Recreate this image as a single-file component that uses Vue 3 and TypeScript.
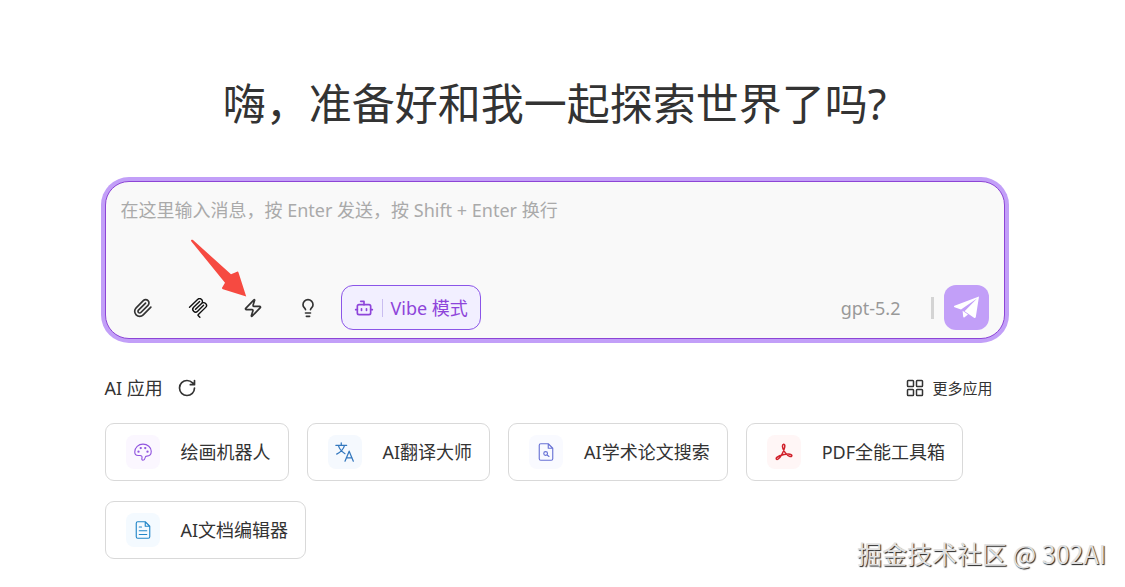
<script setup lang="ts">
import { ref } from 'vue'

interface AppCard {
  name: string
  icon: 'palette' | 'translate' | 'paper' | 'pdf' | 'doc'
}

const message = ref('')
const apps: AppCard[] = [
  { name: '绘画机器人', icon: 'palette' },
  { name: 'AI翻译大师', icon: 'translate' },
  { name: 'AI学术论文搜索', icon: 'paper' },
  { name: 'PDF全能工具箱', icon: 'pdf' },
  { name: 'AI文档编辑器', icon: 'doc' },
]
</script>

<template>
  <main class="page">
    <h1 class="title">嗨，准备好和我一起探索世界了吗?</h1>

    <form class="composer" @submit.prevent>
      <textarea
        v-model="message"
        class="message"
        aria-label="消息"
        placeholder="在这里输入消息，按 Enter 发送，按 Shift + Enter 换行"
      ></textarea>
      <div class="toolbar">
        <button type="button" class="tool" aria-label="附件">
          <svg class="icon line" viewBox="0 0 24 24">
            <path d="m21.44 11.05-9.19 9.19a6 6 0 0 1-8.49-8.49l8.57-8.57A4 4 0 1 1 18 8.84l-8.59 8.57a2 2 0 0 1-2.83-2.83l8.49-8.48" />
          </svg>
        </button>
        <button type="button" class="tool mcp" aria-label="MCP">
          <svg class="icon solid" viewBox="0 0 24 24">
            <path d="M15.688 2.343a2.588 2.588 0 00-3.61 0l-9.626 9.44a.863.863 0 01-1.203 0 .823.823 0 010-1.18l9.626-9.44a4.313 4.313 0 016.016 0 4.116 4.116 0 011.204 3.54 4.3 4.3 0 013.609 1.18l.05.05a4.115 4.115 0 010 5.9l-8.706 8.537a.274.274 0 000 .393l1.788 1.754a.823.823 0 010 1.18.863.863 0 01-1.203 0l-1.788-1.753a1.92 1.92 0 010-2.754l8.706-8.538a2.47 2.47 0 000-3.54l-.05-.049a2.588 2.588 0 00-3.607-.003l-7.172 7.034-.002.002-.098.097a.863.863 0 01-1.204 0 .823.823 0 010-1.18l7.273-7.133a2.47 2.47 0 00-.003-3.537z" />
            <path d="M14.485 4.703a.823.823 0 000-1.18.863.863 0 00-1.204 0l-7.119 6.982a4.115 4.115 0 000 5.9 4.314 4.314 0 006.016 0l7.12-6.982a.823.823 0 000-1.18.863.863 0 00-1.204 0l-7.119 6.982a2.588 2.588 0 01-3.61 0 2.47 2.47 0 010-3.54l7.12-6.982z" />
          </svg>
        </button>
        <button type="button" class="tool" aria-label="快捷指令">
          <svg class="icon line" viewBox="0 0 24 24">
            <path d="M4 14a1 1 0 0 1-.78-1.63l9.9-10.2a.5.5 0 0 1 .86.46l-1.92 6.02A1 1 0 0 0 13 10h7a1 1 0 0 1 .78 1.63l-9.9 10.2a.5.5 0 0 1-.86-.46l1.92-6.02A1 1 0 0 0 11 14z" />
          </svg>
          <svg class="pointer" viewBox="0 0 57 58" aria-hidden="true">
            <path d="M1.2 2.2C.5 1 1.800.2 3 1L41 35.300 47 32.700c.8-.3 1.300 0 1.500.8L56.200 57.500 33 50.200c-1.200-.4-1.300-1.200-.5-2.100L35 43.800Z" />
          </svg>
        </button>
        <button type="button" class="tool" aria-label="深度思考">
          <svg class="icon line" viewBox="0 0 24 24">
            <path d="M15 14c.2-1 .7-1.7 1.5-2.5 1-.9 1.5-2.2 1.5-3.5A6 6 0 0 0 6 8c0 1 .2 2.2 1.5 3.5.7.7 1.3 1.5 1.5 2.5M9 18h6M10 22h4" />
          </svg>
        </button>
        <button type="button" class="vibe">
          <svg class="icon line" viewBox="0 0 24 24">
            <path d="M12 8V4H8M2 14h2M20 14h2M15 13v2M9 13v2" />
            <rect x="4" y="8" width="16" height="12" rx="2" />
          </svg>
          <span class="vibe-rule"></span>
          <span>Vibe 模式</span>
        </button>
        <button type="button" class="model">gpt-5.2</button>
        <span class="rule"></span>
        <button type="submit" class="send" aria-label="发送">
          <svg viewBox="0 0 45 45">
            <path d="M35 11.5 10.5 20.800c-.8.3-.8 1.100 0 1.400L17 24.600 33 13.500 20.600 26.200 30 32.700c.9.5 1.600.2 1.800-.7Z" />
            <path d="M18.600 25.800 19.200 31.800c.1.900.8 1 1.400.4L24 29.400Z" />
          </svg>
        </button>
      </div>
    </form>

    <header class="apps-head">
      <h2>AI 应用</h2>
      <button type="button" class="plain" aria-label="刷新">
        <svg class="icon line" viewBox="0 0 24 24">
          <path d="M21 12a9 9 0 1 1-9-9c2.52 0 4.93 1 6.74 2.74L21 8M21 3v5h-5" />
        </svg>
      </button>
      <button type="button" class="plain more">
        <svg class="icon-sm line" viewBox="0 0 24 24">
          <rect x="2" y="2" width="8" height="8" rx="1" />
          <rect x="14" y="2" width="8" height="8" rx="1" />
          <rect x="14" y="14" width="8" height="8" rx="1" />
          <rect x="2" y="14" width="8" height="8" rx="1" />
        </svg>
        <span>更多应用</span>
      </button>
    </header>

    <nav class="apps" aria-label="AI 应用">
      <button v-for="app in apps" :key="app.name" type="button" class="card">
        <span class="badge" :class="app.icon">
          <svg class="line thin" :class="app.icon === 'translate' ? 'icon' : 'icon-sm'" viewBox="0 0 24 24">
            <template v-if="app.icon === 'palette'">
              <path d="M12 23c-1.600 0-1.800-1.500-1.400-3 .5-1.900-.3-3.300-2.400-3.300H5.500C2.800 16.700 1 15 1 12 1 6 6 1.500 12 1.500S23 5.800 23 11c0 4-2.500 6.500-6 6.500-1.500 0-2 1-2.300 2.500-.3 1.700-.9 3-2.700 3Z" />
              <circle cx="6" cy="11.5" r=".8" />
              <circle cx="9" cy="6.8" r=".8" />
              <circle cx="15" cy="6.8" r=".8" />
              <circle cx="18" cy="11.5" r=".8" />
            </template>
            <template v-else-if="app.icon === 'translate'">
              <path d="M1 4h13M7.500 1v3M11.500 4C10 9 6 12.500 2 14.500M4 4c1 3.500 4 7.500 8 10M12 23l5-12 5 12M13.500 19h7" />
            </template>
            <template v-else-if="app.icon === 'paper'">
              <path d="M15 1H5a2 2 0 0 0-2 2v18a2 2 0 0 0 2 2h14a2 2 0 0 0 2-2V7ZM15 1v6h6M13.500 16l2.500 2" />
              <circle cx="11.5" cy="14" r="2.5" />
            </template>
            <template v-else-if="app.icon === 'pdf'">
              <path d="M11 2c2-1 2.500 1.500 1.700 4.500C11.500 12 7 20 4 21.500c-2 1-3.200-.7-1.500-2.300C6 16 18 13.500 21.500 15.500c2 1.200.5 3-1.500 2.500C16 17 9.500 9 10 4c.1-1 .3-1.700 1-2Z" />
            </template>
            <template v-else>
              <path d="M15 1H5a2 2 0 0 0-2 2v18a2 2 0 0 0 2 2h14a2 2 0 0 0 2-2V7ZM15 1v6h6M7 8h3M7 13h10M7 18h10" />
            </template>
          </svg>
        </span>
        <span>{{ app.name }}</span>
      </button>
    </nav>

    <p class="credit">掘金技术社区 @ 302AI</p>
  </main>
</template>

<style>
body {
  margin: 0;
  background: #fff;
}
</style>

<style scoped>
.page {
  box-sizing: border-box;
  max-width: 930px;
  margin: 0 auto;
  padding: 72px 30px 28px 0;
  margin-left: max(16px, calc(50% - 458px));
  color: #333;
  font-family: "Noto Sans", "Noto Sans CJK SC", sans-serif;
  font-size: 18px;
  line-height: 24px;
}
button,
textarea {
  margin: 0;
  padding: 0;
  border: 0;
  background: none;
  color: inherit;
  font: inherit;
}
button {
  display: flex;
  align-items: center;
  justify-content: center;
  cursor: pointer;
}
.title {
  margin: 0 0 45px;
  font-size: 43px;
  font-weight: 400;
  line-height: 64px;
  text-align: center;
}
.composer {
  display: flex;
  flex-direction: column;
  padding: 16px 15px 8px;
  border: 1px solid #8d45d6;
  border-radius: 24px;
  background: #f9f9f9;
  box-shadow: 0 0 0 4px #c29ff8;
}
.message {
  height: 87px;
  resize: none;
  outline: none;
}
.message::placeholder {
  color: #aaa;
  opacity: 1;
}
.toolbar {
  display: flex;
  align-items: center;
  gap: 10px;
}
.tool {
  position: relative;
  width: 45px;
  height: 45px;
}
.mcp {
  color: #111;
}
.icon {
  width: 20px;
  height: 20px;
}
.icon-sm {
  width: 18px;
  height: 18px;
}
.line {
  fill: none;
  stroke: currentColor;
  stroke-width: 2;
  stroke-linecap: round;
  stroke-linejoin: round;
}
.solid {
  fill: currentColor;
}
.pointer {
  position: absolute;
  right: 29px;
  bottom: 33px;
  width: 57px;
  height: 58px;
  fill: #f64a41;
  pointer-events: none;
}
.vibe {
  box-sizing: border-box;
  height: 45px;
  gap: 8px;
  padding: 0 12px;
  border: 1px solid #8b55e8;
  border-radius: 12px;
  background: #f2efff;
  color: #8e44da;
}
.vibe-rule {
  width: 1px;
  height: 18px;
  background: #c9bdf0;
}
.model {
  margin-left: auto;
  margin-right: 20px;
  color: #999;
}
.rule {
  width: 3px;
  height: 22px;
  background: #d4d4d4;
}
.send {
  width: 45px;
  height: 45px;
  border-radius: 12px;
  background: #c29ff8;
}
.send svg {
  width: 45px;
  height: 45px;
  fill: #fff;
}
.apps-head {
  display: flex;
  align-items: center;
  gap: 14px;
  margin: 37px 12px 23px 0;
}
.apps-head h2 {
  margin: 0;
  font-size: 18px;
  font-weight: 400;
}
.more {
  gap: 8px;
  margin-left: auto;
  font-size: 15px;
}
.apps {
  display: flex;
  flex-wrap: wrap;
  gap: 20px 18px;
}
.card {
  gap: 21px;
  padding: 11px 17px 11px 20px;
  border: 1px solid #d9d9d9;
  border-radius: 9px;
}
.badge {
  display: grid;
  place-items: center;
  width: 34px;
  height: 34px;
  border-radius: 8px;
}
.thin {
  stroke-width: 1.5;
}
.palette {
  background: #fbf7ff;
  color: #9155df;
}
.translate {
  background: #f5f9fe;
  color: #3478be;
}
.pdf .thin {
  stroke-width: 2;
}
.paper {
  background: #f9faff;
  color: #6872d5;
}
.pdf {
  background: #fff6f6;
  color: #d1222c;
}
.doc {
  background: #f4faff;
  color: #2186c8;
}
.credit {
  position: absolute;
  right: 19px;
  bottom: 16px;
  margin: 0;
  color: #e0e0e0;
  font-family: "Noto Sans CJK SC", sans-serif;
  font-size: 25px;
  line-height: 36px;
  text-shadow: 1px 1px 1px #222;
}
</style>
